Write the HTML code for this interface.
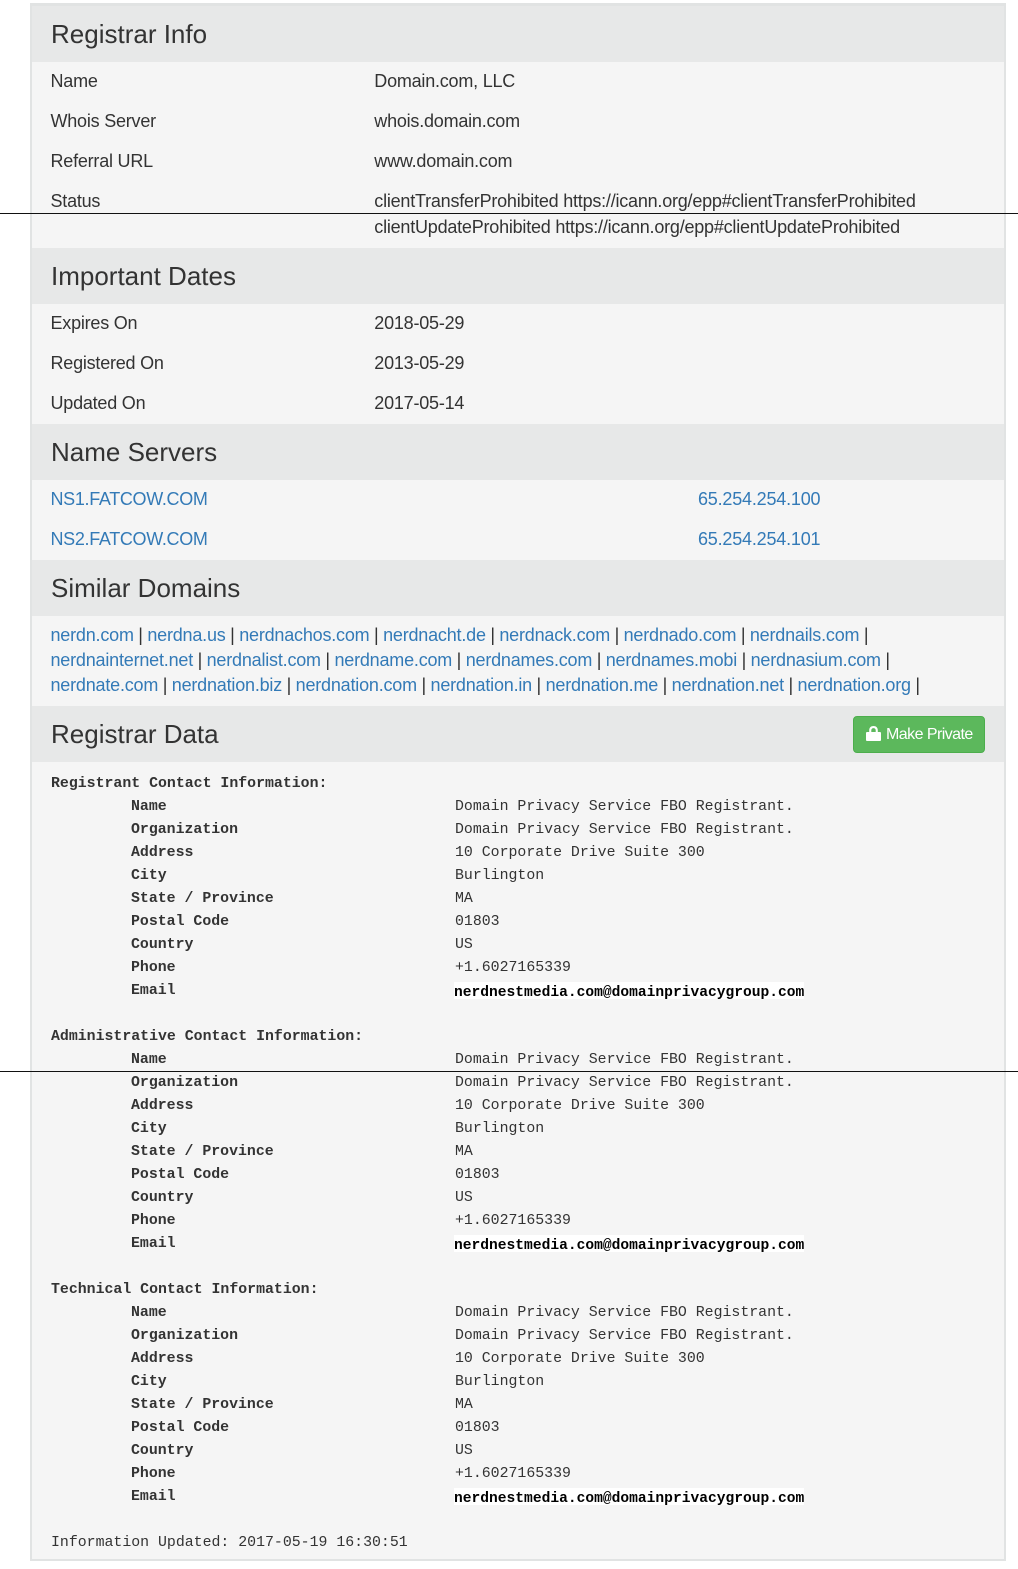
<!DOCTYPE html>
<html><head><meta charset="utf-8"><style>
html,body{margin:0;padding:0;background:#fff}
#p{position:relative;width:1018px;height:1569px;overflow:hidden;background:#fff;font-family:"Liberation Sans",sans-serif;color:#333}
#box{position:absolute;left:30px;top:3px;width:972px;height:1553px;border:2px solid #e1e3e3;border-top-width:3px;background:#f5f5f5}
.h{position:absolute;left:32px;width:972px;background:#e7e8e8}
.hl{position:absolute;left:0;width:1018px;height:1px;background:#111}
.t,.g,.l,.m,.b,.e,.x{position:absolute;white-space:pre;line-height:24px}
.t{font-size:18px;letter-spacing:-.22px}
.l{font-size:18px;letter-spacing:-.2px;word-spacing:-.25px;color:#337ab7}
.l.c{letter-spacing:-.33px}
.l i{font-style:normal;color:#333}
.g{font-size:26px;left:51px;line-height:30px;color:#333}
.m{font-family:"Liberation Mono",monospace;font-size:14.87px;color:#333;left:455px}
.b{font-family:"Liberation Mono",monospace;font-size:14.87px;font-weight:bold;color:#333;left:131px}
.e{font-family:"Liberation Mono",monospace;font-size:14.6px;font-weight:bold;color:#000;left:454px;background:#fff;height:17px;line-height:22px}
.x{left:51px}
#btn{position:absolute;left:853px;top:716px;width:130px;height:35px;background:#5cb85c;border:1px solid #4cae4c;border-radius:4px;color:#fff;font-size:16px;line-height:35px;letter-spacing:-.55px}
</style></head><body><div id="p">
<div id="box"></div>
<div class="h" style="top:6px;height:56px"></div>
<div class="h" style="top:248px;height:56px"></div>
<div class="h" style="top:424px;height:56px"></div>
<div class="h" style="top:560px;height:56px"></div>
<div class="h" style="top:706px;height:56px"></div>

<div class="g" style="top:19px">Registrar Info</div>
<div class="t" style="left:50.500px;top:69px">Name</div><div class="t" style="left:374.300px;top:69px">Domain.com, LLC</div>
<div class="t" style="left:50.500px;top:109px">Whois Server</div><div class="t" style="left:374.300px;top:109px">whois.domain.com</div>
<div class="t" style="left:50.500px;top:149px">Referral URL</div><div class="t" style="left:374.300px;top:149px">www.domain.com</div>
<div class="t" style="left:50.500px;top:189px">Status</div><div class="t" style="left:374.300px;top:189px">clientTransferProhibited https://icann.org/epp#clientTransferProhibited</div>
<div class="t" style="left:374.300px;top:215px">clientUpdateProhibited https://icann.org/epp#clientUpdateProhibited</div>

<div class="g" style="top:261px">Important Dates</div>
<div class="t" style="left:50.500px;top:311px">Expires On</div><div class="t" style="left:374.300px;top:311px">2018-05-29</div>
<div class="t" style="left:50.500px;top:351px">Registered On</div><div class="t" style="left:374.300px;top:351px">2013-05-29</div>
<div class="t" style="left:50.500px;top:391px">Updated On</div><div class="t" style="left:374.300px;top:391px">2017-05-14</div>

<div class="g" style="top:437px">Name Servers</div>
<div class="l c" style="left:50.500px;top:487px">NS1.FATCOW.COM</div><div class="l" style="left:698px;top:487px">65.254.254.100</div>
<div class="l c" style="left:50.500px;top:527px">NS2.FATCOW.COM</div><div class="l" style="left:698px;top:527px">65.254.254.101</div>

<div class="g" style="top:573px">Similar Domains</div>
<div class="l" style="left:50.500px;top:623px">nerdn.com <i>|</i> nerdna.us <i>|</i> nerdnachos.com <i>|</i> nerdnacht.de <i>|</i> nerdnack.com <i>|</i> nerdnado.com <i>|</i> nerdnails.com <i>|</i></div>
<div class="l" style="left:50.500px;top:648px">nerdnainternet.net <i>|</i> nerdnalist.com <i>|</i> nerdname.com <i>|</i> nerdnames.com <i>|</i> nerdnames.mobi <i>|</i> nerdnasium.com <i>|</i></div>
<div class="l" style="left:50.500px;top:673px">nerdnate.com <i>|</i> nerdnation.biz <i>|</i> nerdnation.com <i>|</i> nerdnation.in <i>|</i> nerdnation.me <i>|</i> nerdnation.net <i>|</i> nerdnation.org <i>|</i></div>

<div class="g" style="top:719px">Registrar Data</div>
<div id="btn"><svg style="position:absolute;left:12px;top:9px" width="15" height="15" viewBox="0 0 15 15"><path fill="#fff" fill-rule="evenodd" d="M1 6h2.200V4.200C3.200 1.700 5 0 7.500 0s4.300 1.700 4.300 4.200V6H14a1 1 0 0 1 1 1v7a1 1 0 0 1-1 1H1a1 1 0 0 1-1-1V7a1 1 0 0 1 1-1zM5.300 6h4.400V4.200C9.700 3 8.800 2.100 7.500 2.100S5.300 3 5.300 4.200z"/></svg><span style="position:absolute;left:32px;top:0;white-space:pre">Make Private</span></div>

<div class="b x" style="top:772px">Registrant Contact Information:</div>
<div class="b" style="top:795px">Name</div><div class="m" style="top:795px">Domain Privacy Service FBO Registrant.</div>
<div class="b" style="top:818px">Organization</div><div class="m" style="top:818px">Domain Privacy Service FBO Registrant.</div>
<div class="b" style="top:841px">Address</div><div class="m" style="top:841px">10 Corporate Drive Suite 300</div>
<div class="b" style="top:864px">City</div><div class="m" style="top:864px">Burlington</div>
<div class="b" style="top:887px">State / Province</div><div class="m" style="top:887px">MA</div>
<div class="b" style="top:910px">Postal Code</div><div class="m" style="top:910px">01803</div>
<div class="b" style="top:933px">Country</div><div class="m" style="top:933px">US</div>
<div class="b" style="top:956px">Phone</div><div class="m" style="top:956px">+1.6027165339</div>
<div class="b" style="top:979px">Email</div><div class="e" style="top:982px">nerdnestmedia.com@domainprivacygroup.com</div>

<div class="b x" style="top:1025px">Administrative Contact Information:</div>
<div class="b" style="top:1048px">Name</div><div class="m" style="top:1048px">Domain Privacy Service FBO Registrant.</div>
<div class="b" style="top:1071px">Organization</div><div class="m" style="top:1071px">Domain Privacy Service FBO Registrant.</div>
<div class="b" style="top:1094px">Address</div><div class="m" style="top:1094px">10 Corporate Drive Suite 300</div>
<div class="b" style="top:1117px">City</div><div class="m" style="top:1117px">Burlington</div>
<div class="b" style="top:1140px">State / Province</div><div class="m" style="top:1140px">MA</div>
<div class="b" style="top:1163px">Postal Code</div><div class="m" style="top:1163px">01803</div>
<div class="b" style="top:1186px">Country</div><div class="m" style="top:1186px">US</div>
<div class="b" style="top:1209px">Phone</div><div class="m" style="top:1209px">+1.6027165339</div>
<div class="b" style="top:1232px">Email</div><div class="e" style="top:1235px">nerdnestmedia.com@domainprivacygroup.com</div>

<div class="b x" style="top:1278px">Technical Contact Information:</div>
<div class="b" style="top:1301px">Name</div><div class="m" style="top:1301px">Domain Privacy Service FBO Registrant.</div>
<div class="b" style="top:1324px">Organization</div><div class="m" style="top:1324px">Domain Privacy Service FBO Registrant.</div>
<div class="b" style="top:1347px">Address</div><div class="m" style="top:1347px">10 Corporate Drive Suite 300</div>
<div class="b" style="top:1370px">City</div><div class="m" style="top:1370px">Burlington</div>
<div class="b" style="top:1393px">State / Province</div><div class="m" style="top:1393px">MA</div>
<div class="b" style="top:1416px">Postal Code</div><div class="m" style="top:1416px">01803</div>
<div class="b" style="top:1439px">Country</div><div class="m" style="top:1439px">US</div>
<div class="b" style="top:1462px">Phone</div><div class="m" style="top:1462px">+1.6027165339</div>
<div class="b" style="top:1485px">Email</div><div class="e" style="top:1488px">nerdnestmedia.com@domainprivacygroup.com</div>

<div class="m" style="left:51px;top:1531px">Information Updated: 2017-05-19 16:30:51</div>

<div class="hl" style="top:213px"></div>
<div class="hl" style="top:1071px"></div>
</div></body></html>
